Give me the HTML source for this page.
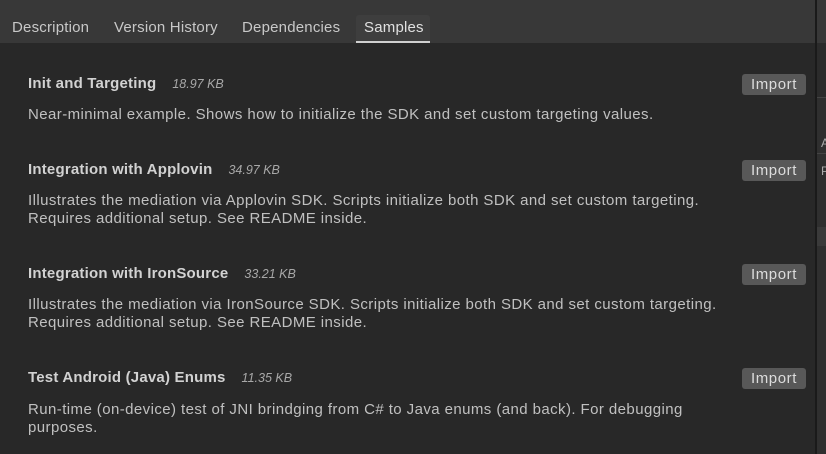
<!DOCTYPE html>
<html><head><meta charset="utf-8"><style>
*{margin:0;padding:0;box-sizing:border-box}
body{width:826px;height:454px;background:#282828;font-family:"Liberation Sans",sans-serif;position:relative;overflow:hidden;color:#c4c4c4}
.top{position:absolute;left:0;top:0;width:815px;height:43px;background:#383838}
.tab{position:absolute;top:19px;font-size:15px;letter-spacing:0.2px;color:#c8c8c8;white-space:nowrap}
.sel{position:absolute;left:356px;top:15px;width:74px;height:28px;background:#3e3e3e;border-radius:3px 3px 0 0;border-bottom:2px solid #d0d0d0}
.divider{position:absolute;left:815px;top:0;width:2px;height:454px;background:#1a1a1a}
.rp{position:absolute;left:817px;top:0;width:9px;height:454px;background:#2b2b2b}
.t{position:absolute;left:28px;font-size:15px;letter-spacing:0.2px;font-weight:bold;color:#d2d2d2;white-space:nowrap}
.t i{font-weight:normal;font-size:12.5px;letter-spacing:0;color:#a8a8a8;margin-left:16px}
.d{position:absolute;left:28px;font-size:15px;letter-spacing:0.42px;line-height:18px;color:#c0c0c0;white-space:nowrap}
.b{position:absolute;left:742px;width:64px;height:21px;background:#585858;border-radius:3px;font-size:15px;letter-spacing:0.6px;color:#dcdcdc;text-align:center;line-height:22px}
</style></head><body>
<div class="top"></div>
<div class="sel"></div>
<div class="tab" style="left:12px">Description</div>
<div class="tab" style="left:114px">Version History</div>
<div class="tab" style="left:242px">Dependencies</div>
<div class="tab" style="left:364px;color:#e0e0e0">Samples</div>
<div class="divider"></div>
<div class="rp"><div style="position:absolute;top:0;left:0;width:9px;height:43px;background:#383838"></div>
<div style="position:absolute;top:97px;left:0;width:9px;height:357px;background:#2f2f2f;border-top:1px solid #444"></div>
<div style="position:absolute;top:153px;left:0;width:9px;height:1px;background:#444"></div>
<div style="position:absolute;top:227px;left:0;width:9px;height:19px;background:#3a3a3a"></div>
<div style="position:absolute;top:136px;left:4px;font-size:12px;color:#aaa">A</div>
<div style="position:absolute;top:164px;left:4px;font-size:12px;color:#aaa">P</div></div>

<div class="t" style="top:75px">Init and Targeting<i>18.97 KB</i></div>
<div class="d" style="top:106px">Near-minimal example. Shows how to initialize the SDK and set custom targeting values.</div>
<div class="b" style="top:74px">Import</div>

<div class="t" style="top:161px">Integration with Applovin<i>34.97 KB</i></div>
<div class="d" style="top:192px">Illustrates the mediation via Applovin SDK. Scripts initialize both SDK and set custom targeting.<br>Requires additional setup. See README inside.</div>
<div class="b" style="top:160px">Import</div>

<div class="t" style="top:265px">Integration with IronSource<i>33.21 KB</i></div>
<div class="d" style="top:296px">Illustrates the mediation via IronSource SDK. Scripts initialize both SDK and set custom targeting.<br>Requires additional setup. See README inside.</div>
<div class="b" style="top:264px">Import</div>

<div class="t" style="top:369px">Test Android (Java) Enums<i>11.35 KB</i></div>
<div class="d" style="top:401px">Run-time (on-device) test of JNI brindging from C# to Java enums (and back). For debugging<br>purposes.</div>
<div class="b" style="top:368px">Import</div>
</body></html>
